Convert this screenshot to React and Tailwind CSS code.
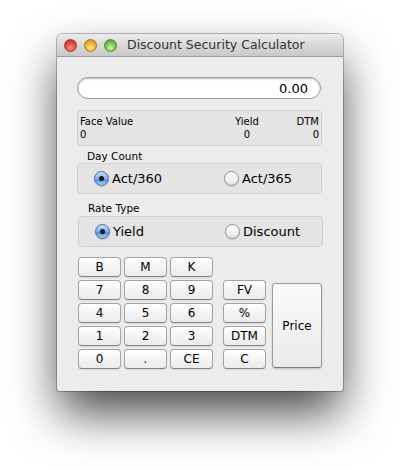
import React from "react";

const font = "font-['DejaVu_Sans',sans-serif]";

function Btn({ label, className = "" }) {
  return (
    <div
      className={`flex items-center justify-center h-[20px] w-[43px] rounded-[4px] border border-[#a3a3a3] border-b-[#838383] bg-[linear-gradient(#ffffff,#f3f3f3_55%,#ebebeb)] shadow-[0_1px_1px_rgba(0,0,0,0.08)] text-[12px] leading-none text-black ${className}`}
    >
      {label}
    </div>
  );
}

function Radio({ checked }) {
  return checked ? (
    <div className="flex items-center justify-center w-[15px] h-[15px] rounded-full border border-[#4b6c9c] bg-[linear-gradient(#c9e0fb,#7fb2ef_50%,#4f95e6_60%,#a8d0fa)] shadow-[0_1px_1px_rgba(0,0,0,0.15)]">
      <div className="w-[5px] h-[5px] rounded-full bg-[#111]" />
    </div>
  ) : (
    <div className="w-[15px] h-[15px] rounded-full border border-[#8f8f8f] bg-[linear-gradient(#ffffff,#f2f2f2_55%,#e2e2e2)] shadow-[0_1px_1px_rgba(0,0,0,0.12)]" />
  );
}

function RadioGroup({ a, b, className = "" }) {
  return (
    <div
      className={`flex items-center h-[31px] w-[245px] rounded-[4px] border border-[#d0d0d0] bg-[#e4e4e4] pl-[16px] ${className}`}
    >
      <div className="flex items-center gap-[3px] w-[130px]">
        <Radio checked />
        <span className="text-[13px] leading-none text-black">{a}</span>
      </div>
      <div className="flex items-center gap-[3px]">
        <Radio />
        <span className="text-[13px] leading-none text-black">{b}</span>
      </div>
    </div>
  );
}

export default function App() {
  return (
    <div className={`w-[400px] h-[470px] bg-white pt-[34px] pl-[57px] ${font}`}>
      <div className="w-[286px] h-[357px] rounded-t-[5px] rounded-b-[3px] bg-[#ececec] shadow-[0_24px_48px_-2px_rgba(0,0,0,0.72),0_0_0_1px_rgba(0,0,0,0.25)] overflow-hidden flex flex-col">
        {/* title bar */}
        <div className="h-[23px] shrink-0 flex items-center border-b border-[#9f9f9f] bg-[linear-gradient(#ececec,#d9d9d9_50%,#c8c8c8)]">
          <div className="flex items-center gap-[7px] pl-[7px]">
            <div className="w-[13px] h-[13px] rounded-full border border-[#9b3a33] bg-[radial-gradient(circle_at_50%_70%,#ff9e93_0%,#ea4d40_45%,#b8251b_100%)]" />
            <div className="w-[13px] h-[13px] rounded-full border border-[#a4751c] bg-[radial-gradient(circle_at_50%_70%,#ffe79a_0%,#f4b43a_45%,#cf8a0f_100%)]" />
            <div className="w-[13px] h-[13px] rounded-full border border-[#4f8a2f] bg-[radial-gradient(circle_at_50%_70%,#d3f5a8_0%,#82c957_45%,#4c9a28_100%)]" />
          </div>
          <span className="ml-[10px] text-[12.5px] leading-none text-[#333]">
            Discount Security Calculator
          </span>
        </div>

        {/* body */}
        <div className="flex flex-col pl-[20px] pt-[20px]">
          <div className="flex items-center justify-end h-[22px] w-[244px] rounded-full border border-[#9d9d9d] bg-white shadow-[inset_0_1px_2px_rgba(0,0,0,0.25)] pr-[12px]">
            <span className="text-[13px] leading-none text-black">0.00</span>
          </div>

          <div className="mt-[11px] h-[36px] w-[245px] rounded-[4px] border border-[#d0d0d0] bg-[#e4e4e4] flex pt-[4px] px-[2px] text-[10px] leading-[13px] text-black">
            <div className="flex-1 flex flex-col">
              <span>Face Value</span>
              <span>0</span>
            </div>
            <div className="w-[40px] flex flex-col items-center">
              <span>Yield</span>
              <span>0</span>
            </div>
            <div className="w-[52px] flex flex-col items-end">
              <span>DTM</span>
              <span>0</span>
            </div>
          </div>

          <div className="mt-[3px] h-[14px] pl-[10px] text-[10.5px] leading-[14px] text-black">
            Day Count
          </div>
          <RadioGroup a="Act/360" b="Act/365" />

          <div className="mt-[7px] h-[14px] pl-[11px] text-[10.5px] leading-[14px] text-black">
            Rate Type
          </div>
          <RadioGroup a="Yield" b="Discount" className="mt-[1px] ml-[1px]" />

          <div className="mt-[10px] ml-[1px] flex flex-col">
            <div className="flex gap-[3px]">
              <Btn label="B" />
              <Btn label="M" />
              <Btn label="K" />
            </div>
            <div className="mt-[3px] flex">
              <div className="grid grid-cols-[43px_43px_43px] gap-[3px]">
                {["7", "8", "9", "4", "5", "6", "1", "2", "3", "0", ".", "CE"].map((l) => (
                  <Btn key={l} label={l} />
                ))}
              </div>
              <div className="ml-[10px] flex flex-col gap-[3px]">
                <Btn label="FV" />
                <Btn label="%" />
                <Btn label="DTM" />
                <Btn label="C" />
              </div>
              <div className="ml-[6px] mt-[3px] h-[85px] w-[50px] flex items-center justify-center rounded-[4px] border border-[#9a9a9a] border-b-[#7a7a7a] bg-[linear-gradient(#fbfbfb,#f2f2f2_50%,#ebebeb)] shadow-[0_1px_2px_rgba(0,0,0,0.2)] text-[12px] leading-none text-black">
                Price
              </div>
            </div>
          </div>
        </div>
      </div>
    </div>
  );
}
